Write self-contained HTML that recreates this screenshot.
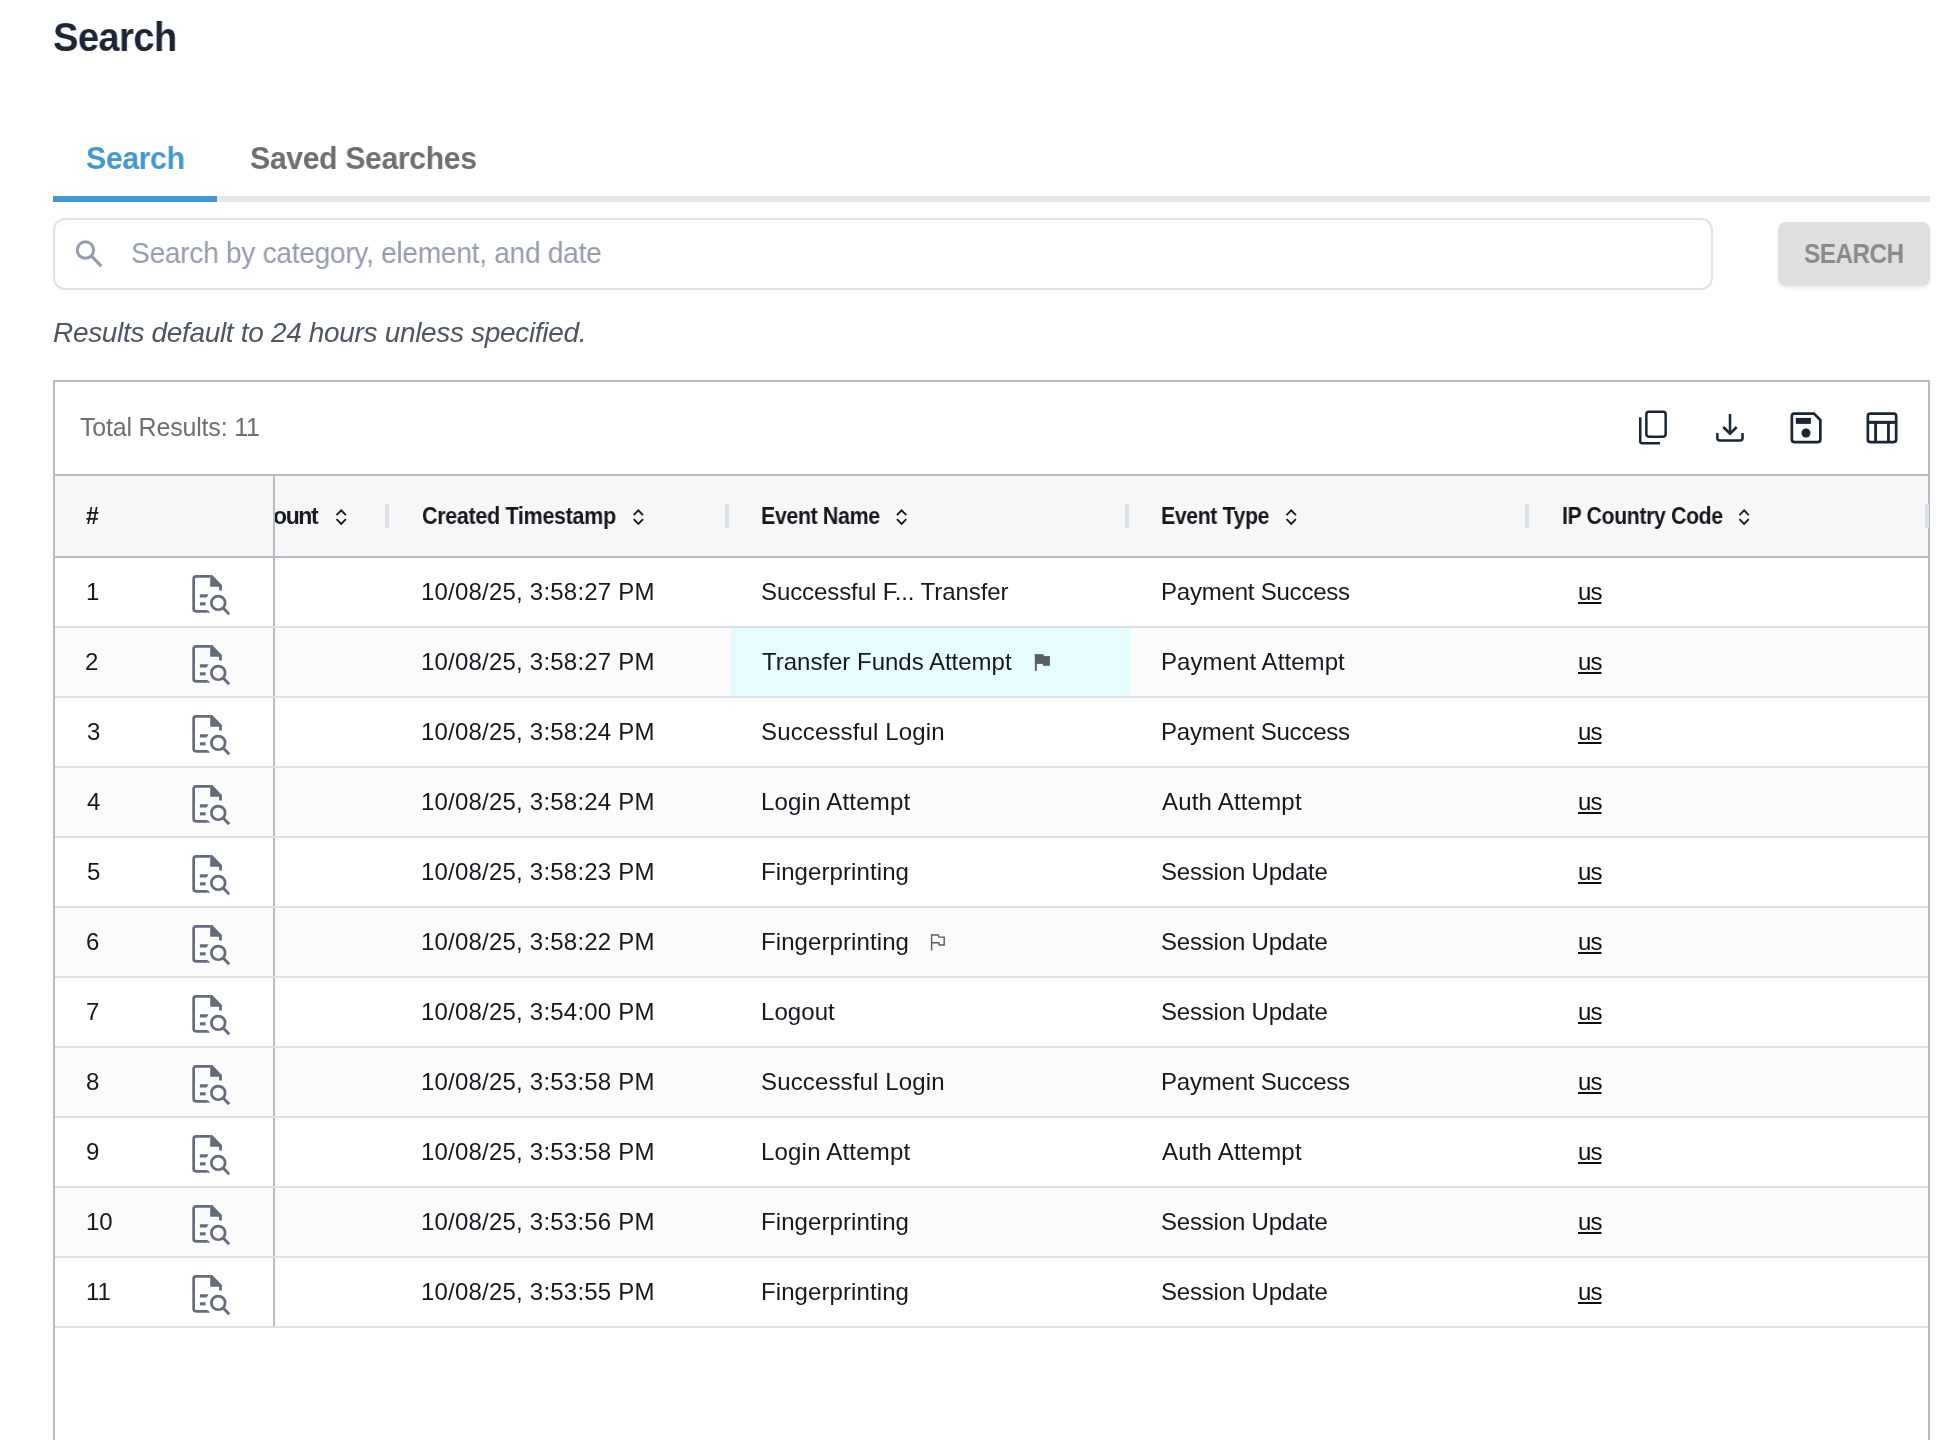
<!DOCTYPE html><html><head><meta charset="utf-8"><style>
*{margin:0;padding:0;box-sizing:border-box}
html,body{width:1952px;height:1440px;overflow:hidden;background:#fff}
body{position:relative;font-family:"Liberation Sans",sans-serif}
.t{position:absolute;white-space:nowrap;line-height:1;will-change:transform}
.r{position:absolute}
svg{position:absolute;overflow:visible}
</style></head><body>
<div class="r" style="left:53px;top:196px;width:1877px;height:6px;background:#e5e7eb;"></div>
<div class="r" style="left:53px;top:196px;width:164px;height:6px;background:#4598cb;"></div>
<div class="r" style="left:53px;top:218px;width:1660px;height:72px;border:2px solid #e1e3e8;border-radius:12px;background:#fff"></div>
<svg style="left:0;top:0" width="1952" height="1440" viewBox="0 0 1952 1440"><circle cx="85.45" cy="250.05" r="8.2" fill="none" stroke="#959cab" stroke-width="3"/><line x1="91.3" y1="255.9" x2="101.3" y2="266.1" stroke="#959cab" stroke-width="3.1"/></svg>
<div class="r" style="left:1778px;top:222px;width:152px;height:64px;background:#e0e0e0;border-radius:8px;box-shadow:0 2px 4px rgba(0,0,0,0.08)"></div>
<div class="t" style="left:53.35px;top:17.14px;font-size:40px;color:#1b2533;font-weight:bold;letter-spacing:-0.531px;font-style:normal;transform:scaleX(0.9505);transform-origin:0 0;">Search</div>
<div class="t" style="left:86.25px;top:141.66px;font-size:32px;color:#4598cb;font-weight:bold;letter-spacing:-0.449px;font-style:normal;transform:scaleX(0.9483);transform-origin:0 0;">Search</div>
<div class="t" style="left:250.00px;top:141.66px;font-size:32px;color:#6f6f6f;font-weight:bold;letter-spacing:-0.420px;font-style:normal;transform:scaleX(0.9459);transform-origin:0 0;">Saved Searches</div>
<div class="t" style="left:130.96px;top:237.71px;font-size:30px;color:#959cab;font-weight:normal;letter-spacing:-0.348px;font-style:normal;transform:scaleX(0.9403);transform-origin:0 0;">Search by category, element, and date</div>
<div class="t" style="left:1804.40px;top:240.30px;font-size:28px;color:#8a8a8a;font-weight:bold;letter-spacing:-0.684px;font-style:normal;transform:scaleX(0.8727);transform-origin:0 0;">SEARCH</div>
<div class="t" style="left:52.75px;top:319.40px;font-size:28px;color:#4e5661;font-weight:normal;letter-spacing:-0.328px;font-style:italic;">Results default to 24 hours unless specified.</div>
<div class="r" style="left:53px;top:380px;width:1877px;height:1100px;border:2px solid #b7bcc6;border-bottom:none;background:#fff"></div>
<div class="t" style="left:79.75px;top:414.74px;font-size:25px;color:#6f6f6f;font-weight:normal;letter-spacing:-0.191px;font-style:normal;">Total Results: 11</div>
<svg style="left:0;top:0" width="1952" height="1440" viewBox="0 0 1952 1440">
<rect x="1646.35" y="411.65" width="19.3" height="25" rx="2.6" fill="none" stroke="#1b2533" stroke-width="2.5"/>
<path d="M1640.25 417.2 V441.25 Q1640.25 443.25 1642.25 443.25 H1660" fill="none" stroke="#1b2533" stroke-width="2.5"/>
<path d="M1730 414 V432" fill="none" stroke="#1b2533" stroke-width="2.5"/>
<path d="M1723.3 427 L1730 433.6 L1736.7 427" fill="none" stroke="#1b2533" stroke-width="2.6"/>
<path d="M1717.35 433 V438 Q1717.35 440.45 1719.8 440.45 H1740.1 Q1742.55 440.45 1742.55 438 V433" fill="none" stroke="#1b2533" stroke-width="2.5"/>
<path d="M1794.35 413.55 H1813.9 L1820.35 420 V439.55 Q1820.35 442.05 1817.85 442.05 H1794.35 Q1791.85 442.05 1791.85 439.55 V416.05 Q1791.85 413.55 1794.35 413.55 Z" fill="none" stroke="#1b2533" stroke-width="2.7"/>
<rect x="1795.8" y="417.9" width="15.1" height="6" fill="#1b2533"/>
<circle cx="1806" cy="433" r="4.5" fill="#1b2533"/>
<rect x="1867.85" y="413.55" width="28.3" height="28.5" rx="2.5" fill="none" stroke="#1b2533" stroke-width="2.7"/>
<path d="M1867.85 422.35 H1896.15" stroke="#1b2533" stroke-width="3.1"/>
<path d="M1875.6 422.35 V442 M1888.45 422.35 V442" stroke="#1b2533" stroke-width="2.8"/>
</svg>
<div class="r" style="left:55px;top:474px;width:1873px;height:2px;background:#b7bcc6;"></div>
<div class="r" style="left:55px;top:476px;width:1873px;height:80px;background:#f7f7f7;"></div>
<div class="r" style="left:55px;top:556px;width:1873px;height:2px;background:#b7bcc6;"></div>
<div class="t" style="left:85.60px;top:504.53px;font-size:23px;color:#15191d;font-weight:bold;letter-spacing:0.000px;font-style:normal;">#</div>
<div class="r" style="left:275px;top:476px;width:1653px;height:80px;overflow:hidden">
<div class="t" style="left:-2.25px;top:28.53px;font-size:23px;color:#15191d;font-weight:bold;letter-spacing:-1.400px;font-style:normal;">ount</div>
</div>
<div class="t" style="left:421.90px;top:504.53px;font-size:23px;color:#15191d;font-weight:bold;letter-spacing:-0.350px;font-style:normal;transform:scaleX(0.9357);transform-origin:0 0;">Created Timestamp</div>
<div class="t" style="left:761.32px;top:504.53px;font-size:23px;color:#15191d;font-weight:bold;letter-spacing:-0.409px;font-style:normal;transform:scaleX(0.9304);transform-origin:0 0;">Event Name</div>
<div class="t" style="left:1161.33px;top:504.53px;font-size:23px;color:#15191d;font-weight:bold;letter-spacing:-0.407px;font-style:normal;transform:scaleX(0.9241);transform-origin:0 0;">Event Type</div>
<div class="t" style="left:1561.58px;top:504.53px;font-size:23px;color:#15191d;font-weight:bold;letter-spacing:-0.391px;font-style:normal;transform:scaleX(0.9243);transform-origin:0 0;">IP Country Code</div>
<svg style="left:0;top:0" width="1952" height="1440" viewBox="0 0 1952 1440"><rect x="385" y="504" width="4" height="24" fill="#dde1ea"/><rect x="725" y="504" width="4" height="24" fill="#dde1ea"/><rect x="1125" y="504" width="4" height="24" fill="#dde1ea"/><rect x="1525" y="504" width="4" height="24" fill="#dde1ea"/><rect x="1925" y="504" width="4" height="24" fill="#dde1ea"/><path d="M336.5 515.2 L341.20000000000005 510.4 L345.90000000000003 515.2 M336.5 519.2 L341.20000000000005 524 L345.90000000000003 519.2" fill="none" stroke="#15191d" stroke-width="1.8"/><path d="M633.65 515.2 L638.35 510.4 L643.05 515.2 M633.65 519.2 L638.35 524 L643.05 519.2" fill="none" stroke="#15191d" stroke-width="1.8"/><path d="M896.9 515.2 L901.6 510.4 L906.3 515.2 M896.9 519.2 L901.6 524 L906.3 519.2" fill="none" stroke="#15191d" stroke-width="1.8"/><path d="M1286.5 515.2 L1291.1999999999998 510.4 L1295.8999999999999 515.2 M1286.5 519.2 L1291.1999999999998 524 L1295.8999999999999 519.2" fill="none" stroke="#15191d" stroke-width="1.8"/><path d="M1739.4 515.2 L1744.1 510.4 L1748.8 515.2 M1739.4 519.2 L1744.1 524 L1748.8 519.2" fill="none" stroke="#15191d" stroke-width="1.8"/></svg>
<div class="r" style="left:55px;top:558px;width:1873px;height:68px;background:#ffffff;"></div>
<div class="r" style="left:55px;top:626px;width:1873px;height:2px;background:#dce1e9;"></div>
<div class="t" style="left:85.60px;top:579.68px;font-size:24px;color:#15191d;font-weight:normal;letter-spacing:0.000px;font-style:normal;">1</div>
<div class="t" style="left:420.50px;top:579.68px;font-size:24px;color:#15191d;font-weight:normal;letter-spacing:0.210px;font-style:normal;">10/08/25, 3:58:27 PM</div>
<div class="t" style="left:760.90px;top:579.68px;font-size:24px;color:#15191d;font-weight:normal;letter-spacing:-0.085px;font-style:normal;">Successful F... Transfer</div>
<div class="t" style="left:1161.20px;top:579.68px;font-size:24px;color:#15191d;font-weight:normal;letter-spacing:-0.213px;font-style:normal;">Payment Success</div>
<div class="t" style="left:1577.60px;top:579.68px;font-size:24px;color:#0b0e10;font-weight:normal;letter-spacing:-0.948px;font-style:normal;text-decoration:underline;text-decoration-thickness:2px;text-underline-offset:2px">us</div>
<div class="r" style="left:55px;top:628px;width:1873px;height:68px;background:#fbfbfb;"></div>
<div class="r" style="left:731px;top:628px;width:400px;height:68px;background:#e6fcfd;"></div>
<div class="r" style="left:55px;top:696px;width:1873px;height:2px;background:#dce1e9;"></div>
<div class="t" style="left:85.00px;top:649.68px;font-size:24px;color:#15191d;font-weight:normal;letter-spacing:0.000px;font-style:normal;">2</div>
<div class="t" style="left:420.50px;top:649.68px;font-size:24px;color:#15191d;font-weight:normal;letter-spacing:0.210px;font-style:normal;">10/08/25, 3:58:27 PM</div>
<div class="t" style="left:761.90px;top:649.68px;font-size:24px;color:#15191d;font-weight:normal;letter-spacing:-0.014px;font-style:normal;">Transfer Funds Attempt</div>
<div class="t" style="left:1161.20px;top:649.68px;font-size:24px;color:#15191d;font-weight:normal;letter-spacing:0.071px;font-style:normal;">Payment Attempt</div>
<div class="t" style="left:1577.60px;top:649.68px;font-size:24px;color:#0b0e10;font-weight:normal;letter-spacing:-0.948px;font-style:normal;text-decoration:underline;text-decoration-thickness:2px;text-underline-offset:2px">us</div>
<div class="r" style="left:55px;top:698px;width:1873px;height:68px;background:#ffffff;"></div>
<div class="r" style="left:55px;top:766px;width:1873px;height:2px;background:#dce1e9;"></div>
<div class="t" style="left:86.60px;top:719.68px;font-size:24px;color:#15191d;font-weight:normal;letter-spacing:0.000px;font-style:normal;">3</div>
<div class="t" style="left:420.50px;top:719.68px;font-size:24px;color:#15191d;font-weight:normal;letter-spacing:0.210px;font-style:normal;">10/08/25, 3:58:24 PM</div>
<div class="t" style="left:760.90px;top:719.68px;font-size:24px;color:#15191d;font-weight:normal;letter-spacing:0.140px;font-style:normal;">Successful Login</div>
<div class="t" style="left:1161.20px;top:719.68px;font-size:24px;color:#15191d;font-weight:normal;letter-spacing:-0.213px;font-style:normal;">Payment Success</div>
<div class="t" style="left:1577.60px;top:719.68px;font-size:24px;color:#0b0e10;font-weight:normal;letter-spacing:-0.948px;font-style:normal;text-decoration:underline;text-decoration-thickness:2px;text-underline-offset:2px">us</div>
<div class="r" style="left:55px;top:768px;width:1873px;height:68px;background:#fbfbfb;"></div>
<div class="r" style="left:55px;top:836px;width:1873px;height:2px;background:#dce1e9;"></div>
<div class="t" style="left:86.60px;top:789.68px;font-size:24px;color:#15191d;font-weight:normal;letter-spacing:0.000px;font-style:normal;">4</div>
<div class="t" style="left:420.50px;top:789.68px;font-size:24px;color:#15191d;font-weight:normal;letter-spacing:0.210px;font-style:normal;">10/08/25, 3:58:24 PM</div>
<div class="t" style="left:760.90px;top:789.68px;font-size:24px;color:#15191d;font-weight:normal;letter-spacing:0.194px;font-style:normal;">Login Attempt</div>
<div class="t" style="left:1162.20px;top:789.68px;font-size:24px;color:#15191d;font-weight:normal;letter-spacing:0.194px;font-style:normal;">Auth Attempt</div>
<div class="t" style="left:1577.60px;top:789.68px;font-size:24px;color:#0b0e10;font-weight:normal;letter-spacing:-0.948px;font-style:normal;text-decoration:underline;text-decoration-thickness:2px;text-underline-offset:2px">us</div>
<div class="r" style="left:55px;top:838px;width:1873px;height:68px;background:#ffffff;"></div>
<div class="r" style="left:55px;top:906px;width:1873px;height:2px;background:#dce1e9;"></div>
<div class="t" style="left:86.60px;top:859.68px;font-size:24px;color:#15191d;font-weight:normal;letter-spacing:0.000px;font-style:normal;">5</div>
<div class="t" style="left:420.50px;top:859.68px;font-size:24px;color:#15191d;font-weight:normal;letter-spacing:0.210px;font-style:normal;">10/08/25, 3:58:23 PM</div>
<div class="t" style="left:760.90px;top:859.68px;font-size:24px;color:#15191d;font-weight:normal;letter-spacing:0.093px;font-style:normal;">Fingerprinting</div>
<div class="t" style="left:1161.20px;top:859.68px;font-size:24px;color:#15191d;font-weight:normal;letter-spacing:-0.192px;font-style:normal;">Session Update</div>
<div class="t" style="left:1577.60px;top:859.68px;font-size:24px;color:#0b0e10;font-weight:normal;letter-spacing:-0.948px;font-style:normal;text-decoration:underline;text-decoration-thickness:2px;text-underline-offset:2px">us</div>
<div class="r" style="left:55px;top:908px;width:1873px;height:68px;background:#fbfbfb;"></div>
<div class="r" style="left:55px;top:976px;width:1873px;height:2px;background:#dce1e9;"></div>
<div class="t" style="left:85.60px;top:929.68px;font-size:24px;color:#15191d;font-weight:normal;letter-spacing:0.000px;font-style:normal;">6</div>
<div class="t" style="left:420.50px;top:929.68px;font-size:24px;color:#15191d;font-weight:normal;letter-spacing:0.210px;font-style:normal;">10/08/25, 3:58:22 PM</div>
<div class="t" style="left:760.90px;top:929.68px;font-size:24px;color:#15191d;font-weight:normal;letter-spacing:0.093px;font-style:normal;">Fingerprinting</div>
<div class="t" style="left:1161.20px;top:929.68px;font-size:24px;color:#15191d;font-weight:normal;letter-spacing:-0.192px;font-style:normal;">Session Update</div>
<div class="t" style="left:1577.60px;top:929.68px;font-size:24px;color:#0b0e10;font-weight:normal;letter-spacing:-0.948px;font-style:normal;text-decoration:underline;text-decoration-thickness:2px;text-underline-offset:2px">us</div>
<div class="r" style="left:55px;top:978px;width:1873px;height:68px;background:#ffffff;"></div>
<div class="r" style="left:55px;top:1046px;width:1873px;height:2px;background:#dce1e9;"></div>
<div class="t" style="left:85.60px;top:999.68px;font-size:24px;color:#15191d;font-weight:normal;letter-spacing:0.000px;font-style:normal;">7</div>
<div class="t" style="left:420.50px;top:999.68px;font-size:24px;color:#15191d;font-weight:normal;letter-spacing:0.210px;font-style:normal;">10/08/25, 3:54:00 PM</div>
<div class="t" style="left:760.90px;top:999.68px;font-size:24px;color:#15191d;font-weight:normal;letter-spacing:0.072px;font-style:normal;">Logout</div>
<div class="t" style="left:1161.20px;top:999.68px;font-size:24px;color:#15191d;font-weight:normal;letter-spacing:-0.192px;font-style:normal;">Session Update</div>
<div class="t" style="left:1577.60px;top:999.68px;font-size:24px;color:#0b0e10;font-weight:normal;letter-spacing:-0.948px;font-style:normal;text-decoration:underline;text-decoration-thickness:2px;text-underline-offset:2px">us</div>
<div class="r" style="left:55px;top:1048px;width:1873px;height:68px;background:#fbfbfb;"></div>
<div class="r" style="left:55px;top:1116px;width:1873px;height:2px;background:#dce1e9;"></div>
<div class="t" style="left:85.60px;top:1069.68px;font-size:24px;color:#15191d;font-weight:normal;letter-spacing:0.000px;font-style:normal;">8</div>
<div class="t" style="left:420.50px;top:1069.68px;font-size:24px;color:#15191d;font-weight:normal;letter-spacing:0.210px;font-style:normal;">10/08/25, 3:53:58 PM</div>
<div class="t" style="left:760.90px;top:1069.68px;font-size:24px;color:#15191d;font-weight:normal;letter-spacing:0.140px;font-style:normal;">Successful Login</div>
<div class="t" style="left:1161.20px;top:1069.68px;font-size:24px;color:#15191d;font-weight:normal;letter-spacing:-0.213px;font-style:normal;">Payment Success</div>
<div class="t" style="left:1577.60px;top:1069.68px;font-size:24px;color:#0b0e10;font-weight:normal;letter-spacing:-0.948px;font-style:normal;text-decoration:underline;text-decoration-thickness:2px;text-underline-offset:2px">us</div>
<div class="r" style="left:55px;top:1118px;width:1873px;height:68px;background:#ffffff;"></div>
<div class="r" style="left:55px;top:1186px;width:1873px;height:2px;background:#dce1e9;"></div>
<div class="t" style="left:85.60px;top:1139.68px;font-size:24px;color:#15191d;font-weight:normal;letter-spacing:0.000px;font-style:normal;">9</div>
<div class="t" style="left:420.50px;top:1139.68px;font-size:24px;color:#15191d;font-weight:normal;letter-spacing:0.210px;font-style:normal;">10/08/25, 3:53:58 PM</div>
<div class="t" style="left:760.90px;top:1139.68px;font-size:24px;color:#15191d;font-weight:normal;letter-spacing:0.194px;font-style:normal;">Login Attempt</div>
<div class="t" style="left:1162.20px;top:1139.68px;font-size:24px;color:#15191d;font-weight:normal;letter-spacing:0.194px;font-style:normal;">Auth Attempt</div>
<div class="t" style="left:1577.60px;top:1139.68px;font-size:24px;color:#0b0e10;font-weight:normal;letter-spacing:-0.948px;font-style:normal;text-decoration:underline;text-decoration-thickness:2px;text-underline-offset:2px">us</div>
<div class="r" style="left:55px;top:1188px;width:1873px;height:68px;background:#fbfbfb;"></div>
<div class="r" style="left:55px;top:1256px;width:1873px;height:2px;background:#dce1e9;"></div>
<div class="t" style="left:85.60px;top:1209.68px;font-size:24px;color:#15191d;font-weight:normal;letter-spacing:0.000px;font-style:normal;">10</div>
<div class="t" style="left:420.50px;top:1209.68px;font-size:24px;color:#15191d;font-weight:normal;letter-spacing:0.210px;font-style:normal;">10/08/25, 3:53:56 PM</div>
<div class="t" style="left:760.90px;top:1209.68px;font-size:24px;color:#15191d;font-weight:normal;letter-spacing:0.093px;font-style:normal;">Fingerprinting</div>
<div class="t" style="left:1161.20px;top:1209.68px;font-size:24px;color:#15191d;font-weight:normal;letter-spacing:-0.192px;font-style:normal;">Session Update</div>
<div class="t" style="left:1577.60px;top:1209.68px;font-size:24px;color:#0b0e10;font-weight:normal;letter-spacing:-0.948px;font-style:normal;text-decoration:underline;text-decoration-thickness:2px;text-underline-offset:2px">us</div>
<div class="r" style="left:55px;top:1258px;width:1873px;height:68px;background:#ffffff;"></div>
<div class="r" style="left:55px;top:1326px;width:1873px;height:2px;background:#dce1e9;"></div>
<div class="t" style="left:85.60px;top:1279.68px;font-size:24px;color:#15191d;font-weight:normal;letter-spacing:0.000px;font-style:normal;">11</div>
<div class="t" style="left:420.50px;top:1279.68px;font-size:24px;color:#15191d;font-weight:normal;letter-spacing:0.210px;font-style:normal;">10/08/25, 3:53:55 PM</div>
<div class="t" style="left:760.90px;top:1279.68px;font-size:24px;color:#15191d;font-weight:normal;letter-spacing:0.093px;font-style:normal;">Fingerprinting</div>
<div class="t" style="left:1161.20px;top:1279.68px;font-size:24px;color:#15191d;font-weight:normal;letter-spacing:-0.192px;font-style:normal;">Session Update</div>
<div class="t" style="left:1577.60px;top:1279.68px;font-size:24px;color:#0b0e10;font-weight:normal;letter-spacing:-0.948px;font-style:normal;text-decoration:underline;text-decoration-thickness:2px;text-underline-offset:2px">us</div>
<div class="r" style="left:273px;top:476px;width:2px;height:80px;background:#b7bcc6;"></div>
<div class="r" style="left:273px;top:558px;width:2px;height:68px;background:#b7bcc6;"></div>
<div class="r" style="left:273px;top:628px;width:2px;height:68px;background:#b7bcc6;"></div>
<div class="r" style="left:273px;top:698px;width:2px;height:68px;background:#b7bcc6;"></div>
<div class="r" style="left:273px;top:768px;width:2px;height:68px;background:#b7bcc6;"></div>
<div class="r" style="left:273px;top:838px;width:2px;height:68px;background:#b7bcc6;"></div>
<div class="r" style="left:273px;top:908px;width:2px;height:68px;background:#b7bcc6;"></div>
<div class="r" style="left:273px;top:978px;width:2px;height:68px;background:#b7bcc6;"></div>
<div class="r" style="left:273px;top:1048px;width:2px;height:68px;background:#b7bcc6;"></div>
<div class="r" style="left:273px;top:1118px;width:2px;height:68px;background:#b7bcc6;"></div>
<div class="r" style="left:273px;top:1188px;width:2px;height:68px;background:#b7bcc6;"></div>
<div class="r" style="left:273px;top:1258px;width:2px;height:68px;background:#b7bcc6;"></div>
<svg style="left:0;top:0" width="1952" height="1440" viewBox="0 0 1952 1440"><g transform="translate(0,0)" fill="#646c7c">
<path d="M210.3 576.35 H196.15 Q193.65 576.35 193.65 578.85 V608.85 Q193.65 611.35 196.15 611.35 H207.7" fill="none" stroke="#646c7c" stroke-width="2.7"/>
<path d="M210.2 575 H212.2 L221.9 584.9 V590.6 H219.1 V586.7 H210.2 Z"/>
<path d="M207.6 610 L210.2 612.7 H207.6 Z"/>
<path d="M199.9 594.2 H208.5 L206.6 597.5 H199.9 Z"/>
<rect x="199.9" y="602.3" width="5.7" height="3.1"/>
<circle cx="218.25" cy="602.9" r="6.85" fill="none" stroke="#646c7c" stroke-width="2.7"/>
<path d="M223 607.8 L229.2 614.2" stroke="#646c7c" stroke-width="2.8"/>
</g><g transform="translate(0,70)" fill="#646c7c">
<path d="M210.3 576.35 H196.15 Q193.65 576.35 193.65 578.85 V608.85 Q193.65 611.35 196.15 611.35 H207.7" fill="none" stroke="#646c7c" stroke-width="2.7"/>
<path d="M210.2 575 H212.2 L221.9 584.9 V590.6 H219.1 V586.7 H210.2 Z"/>
<path d="M207.6 610 L210.2 612.7 H207.6 Z"/>
<path d="M199.9 594.2 H208.5 L206.6 597.5 H199.9 Z"/>
<rect x="199.9" y="602.3" width="5.7" height="3.1"/>
<circle cx="218.25" cy="602.9" r="6.85" fill="none" stroke="#646c7c" stroke-width="2.7"/>
<path d="M223 607.8 L229.2 614.2" stroke="#646c7c" stroke-width="2.8"/>
</g><g transform="translate(0,140)" fill="#646c7c">
<path d="M210.3 576.35 H196.15 Q193.65 576.35 193.65 578.85 V608.85 Q193.65 611.35 196.15 611.35 H207.7" fill="none" stroke="#646c7c" stroke-width="2.7"/>
<path d="M210.2 575 H212.2 L221.9 584.9 V590.6 H219.1 V586.7 H210.2 Z"/>
<path d="M207.6 610 L210.2 612.7 H207.6 Z"/>
<path d="M199.9 594.2 H208.5 L206.6 597.5 H199.9 Z"/>
<rect x="199.9" y="602.3" width="5.7" height="3.1"/>
<circle cx="218.25" cy="602.9" r="6.85" fill="none" stroke="#646c7c" stroke-width="2.7"/>
<path d="M223 607.8 L229.2 614.2" stroke="#646c7c" stroke-width="2.8"/>
</g><g transform="translate(0,210)" fill="#646c7c">
<path d="M210.3 576.35 H196.15 Q193.65 576.35 193.65 578.85 V608.85 Q193.65 611.35 196.15 611.35 H207.7" fill="none" stroke="#646c7c" stroke-width="2.7"/>
<path d="M210.2 575 H212.2 L221.9 584.9 V590.6 H219.1 V586.7 H210.2 Z"/>
<path d="M207.6 610 L210.2 612.7 H207.6 Z"/>
<path d="M199.9 594.2 H208.5 L206.6 597.5 H199.9 Z"/>
<rect x="199.9" y="602.3" width="5.7" height="3.1"/>
<circle cx="218.25" cy="602.9" r="6.85" fill="none" stroke="#646c7c" stroke-width="2.7"/>
<path d="M223 607.8 L229.2 614.2" stroke="#646c7c" stroke-width="2.8"/>
</g><g transform="translate(0,280)" fill="#646c7c">
<path d="M210.3 576.35 H196.15 Q193.65 576.35 193.65 578.85 V608.85 Q193.65 611.35 196.15 611.35 H207.7" fill="none" stroke="#646c7c" stroke-width="2.7"/>
<path d="M210.2 575 H212.2 L221.9 584.9 V590.6 H219.1 V586.7 H210.2 Z"/>
<path d="M207.6 610 L210.2 612.7 H207.6 Z"/>
<path d="M199.9 594.2 H208.5 L206.6 597.5 H199.9 Z"/>
<rect x="199.9" y="602.3" width="5.7" height="3.1"/>
<circle cx="218.25" cy="602.9" r="6.85" fill="none" stroke="#646c7c" stroke-width="2.7"/>
<path d="M223 607.8 L229.2 614.2" stroke="#646c7c" stroke-width="2.8"/>
</g><g transform="translate(0,350)" fill="#646c7c">
<path d="M210.3 576.35 H196.15 Q193.65 576.35 193.65 578.85 V608.85 Q193.65 611.35 196.15 611.35 H207.7" fill="none" stroke="#646c7c" stroke-width="2.7"/>
<path d="M210.2 575 H212.2 L221.9 584.9 V590.6 H219.1 V586.7 H210.2 Z"/>
<path d="M207.6 610 L210.2 612.7 H207.6 Z"/>
<path d="M199.9 594.2 H208.5 L206.6 597.5 H199.9 Z"/>
<rect x="199.9" y="602.3" width="5.7" height="3.1"/>
<circle cx="218.25" cy="602.9" r="6.85" fill="none" stroke="#646c7c" stroke-width="2.7"/>
<path d="M223 607.8 L229.2 614.2" stroke="#646c7c" stroke-width="2.8"/>
</g><g transform="translate(0,420)" fill="#646c7c">
<path d="M210.3 576.35 H196.15 Q193.65 576.35 193.65 578.85 V608.85 Q193.65 611.35 196.15 611.35 H207.7" fill="none" stroke="#646c7c" stroke-width="2.7"/>
<path d="M210.2 575 H212.2 L221.9 584.9 V590.6 H219.1 V586.7 H210.2 Z"/>
<path d="M207.6 610 L210.2 612.7 H207.6 Z"/>
<path d="M199.9 594.2 H208.5 L206.6 597.5 H199.9 Z"/>
<rect x="199.9" y="602.3" width="5.7" height="3.1"/>
<circle cx="218.25" cy="602.9" r="6.85" fill="none" stroke="#646c7c" stroke-width="2.7"/>
<path d="M223 607.8 L229.2 614.2" stroke="#646c7c" stroke-width="2.8"/>
</g><g transform="translate(0,490)" fill="#646c7c">
<path d="M210.3 576.35 H196.15 Q193.65 576.35 193.65 578.85 V608.85 Q193.65 611.35 196.15 611.35 H207.7" fill="none" stroke="#646c7c" stroke-width="2.7"/>
<path d="M210.2 575 H212.2 L221.9 584.9 V590.6 H219.1 V586.7 H210.2 Z"/>
<path d="M207.6 610 L210.2 612.7 H207.6 Z"/>
<path d="M199.9 594.2 H208.5 L206.6 597.5 H199.9 Z"/>
<rect x="199.9" y="602.3" width="5.7" height="3.1"/>
<circle cx="218.25" cy="602.9" r="6.85" fill="none" stroke="#646c7c" stroke-width="2.7"/>
<path d="M223 607.8 L229.2 614.2" stroke="#646c7c" stroke-width="2.8"/>
</g><g transform="translate(0,560)" fill="#646c7c">
<path d="M210.3 576.35 H196.15 Q193.65 576.35 193.65 578.85 V608.85 Q193.65 611.35 196.15 611.35 H207.7" fill="none" stroke="#646c7c" stroke-width="2.7"/>
<path d="M210.2 575 H212.2 L221.9 584.9 V590.6 H219.1 V586.7 H210.2 Z"/>
<path d="M207.6 610 L210.2 612.7 H207.6 Z"/>
<path d="M199.9 594.2 H208.5 L206.6 597.5 H199.9 Z"/>
<rect x="199.9" y="602.3" width="5.7" height="3.1"/>
<circle cx="218.25" cy="602.9" r="6.85" fill="none" stroke="#646c7c" stroke-width="2.7"/>
<path d="M223 607.8 L229.2 614.2" stroke="#646c7c" stroke-width="2.8"/>
</g><g transform="translate(0,630)" fill="#646c7c">
<path d="M210.3 576.35 H196.15 Q193.65 576.35 193.65 578.85 V608.85 Q193.65 611.35 196.15 611.35 H207.7" fill="none" stroke="#646c7c" stroke-width="2.7"/>
<path d="M210.2 575 H212.2 L221.9 584.9 V590.6 H219.1 V586.7 H210.2 Z"/>
<path d="M207.6 610 L210.2 612.7 H207.6 Z"/>
<path d="M199.9 594.2 H208.5 L206.6 597.5 H199.9 Z"/>
<rect x="199.9" y="602.3" width="5.7" height="3.1"/>
<circle cx="218.25" cy="602.9" r="6.85" fill="none" stroke="#646c7c" stroke-width="2.7"/>
<path d="M223 607.8 L229.2 614.2" stroke="#646c7c" stroke-width="2.8"/>
</g><g transform="translate(0,700)" fill="#646c7c">
<path d="M210.3 576.35 H196.15 Q193.65 576.35 193.65 578.85 V608.85 Q193.65 611.35 196.15 611.35 H207.7" fill="none" stroke="#646c7c" stroke-width="2.7"/>
<path d="M210.2 575 H212.2 L221.9 584.9 V590.6 H219.1 V586.7 H210.2 Z"/>
<path d="M207.6 610 L210.2 612.7 H207.6 Z"/>
<path d="M199.9 594.2 H208.5 L206.6 597.5 H199.9 Z"/>
<rect x="199.9" y="602.3" width="5.7" height="3.1"/>
<circle cx="218.25" cy="602.9" r="6.85" fill="none" stroke="#646c7c" stroke-width="2.7"/>
<path d="M223 607.8 L229.2 614.2" stroke="#646c7c" stroke-width="2.8"/>
</g><g fill="#555d66"><rect x="1034.9" y="654.2" width="1.9" height="16.6"/><rect x="1034.9" y="654.2" width="8.85" height="9.7"/><rect x="1042.9" y="656.1" width="7" height="9.7"/></g>
<path d="M931.6 950.6 V935 H938.3 L938.8 937.1 H944.2 V945 H939.3 L938.8 942.8 H931.6" fill="none" stroke="#555d66" stroke-width="1.4"/></svg>
</body></html>
